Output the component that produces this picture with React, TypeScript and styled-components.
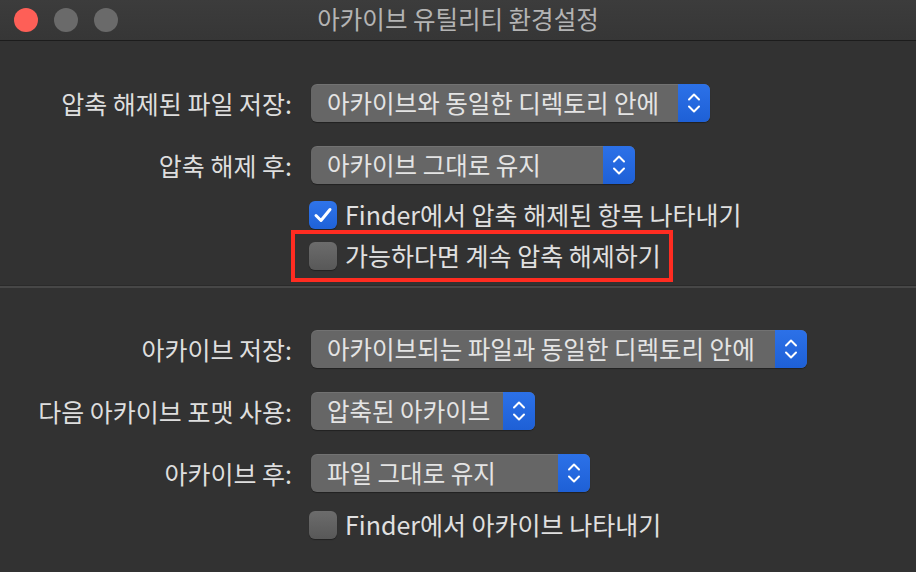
import React from 'react';
import styled, { createGlobalStyle } from 'styled-components';

const GlobalStyle = createGlobalStyle`
  html, body {
    margin: 0;
    padding: 0;
    background: #323232;
  }
  body {
    font-family: "Noto Sans CJK KR", "Noto Sans", sans-serif;
    -webkit-font-smoothing: antialiased;
  }
`;

const Window = styled.div`
  width: 916px;
  height: 572px;
  background: #323232;
  overflow: hidden;
  display: flex;
  flex-direction: column;
`;

const TitleBar = styled.div`
  position: relative;
  height: 40px;
  flex-shrink: 0;
  background: linear-gradient(#3c3c3c, #363636);
  border-bottom: 1px solid #1c1c1c;
  display: flex;
  align-items: center;
  justify-content: center;
`;

const Lights = styled.div`
  position: absolute;
  left: 14px;
  top: 8px;
  display: flex;
  gap: 16px;
`;

const Light = styled.span<{ $color: string }>`
  width: 24px;
  height: 24px;
  border-radius: 50%;
  background: ${(p) => p.$color};
`;

const Title = styled.div`
  color: #b4b4b4;
  font-size: 24.5px;
  line-height: 1;
  margin-top: -2px;
`;

const Section = styled.div<{ $top: number; $bottom: number }>`
  padding: ${(p) => p.$top}px 0 ${(p) => p.$bottom}px;
  display: flex;
  flex-direction: column;
`;

const Row = styled.div`
  display: grid;
  grid-template-columns: 292px auto;
  column-gap: 19px;
  align-items: center;
  height: 38px;
  & + & {
    margin-top: 24px;
  }
`;

const Label = styled.div`
  text-align: right;
  color: #dedede;
  font-size: 25px;
  line-height: 1;
  white-space: nowrap;
`;

const Popup = styled.div<{ $width: number }>`
  width: ${(p) => p.$width}px;
  height: 38px;
  box-sizing: border-box;
  display: flex;
  align-items: stretch;
  border-radius: 6px;
  background: #666666;
  box-shadow: 0 1px 1px rgba(0, 0, 0, 0.35), inset 0 1px 0 rgba(255, 255, 255, 0.08);
  overflow: hidden;
`;

const PopupText = styled.div`
  flex: 1;
  display: flex;
  align-items: center;
  padding-left: 16px;
  color: #e4e4e4;
  font-size: 24.5px;
  line-height: 1;
  white-space: nowrap;
  overflow: hidden;
`;

const Stepper = styled.div`
  width: 32px;
  flex-shrink: 0;
  background: linear-gradient(#2c71e8, #1e60d6);
  display: flex;
  align-items: center;
  justify-content: center;
`;

const CheckRow = styled.div<{ $marked?: boolean }>`
  position: relative;
  display: flex;
  align-items: center;
  gap: 8px;
  height: 41px;
  margin-left: 309px;
  width: fit-content;
  color: #e0e0e0;
  font-size: 25px;
  line-height: 1;
  white-space: nowrap;

  ${(p) =>
    p.$marked &&
    `
    &::after {
      content: '';
      position: absolute;
      left: -18px;
      top: -5px;
      width: 382px;
      height: 52px;
      box-sizing: border-box;
      border: 4px solid #ff2c21;
    }
  `}
`;

const Box = styled.span<{ $checked?: boolean }>`
  width: 28px;
  height: 28px;
  flex-shrink: 0;
  box-sizing: border-box;
  border-radius: 6px;
  display: flex;
  align-items: center;
  justify-content: center;
  background: ${(p) =>
    p.$checked ? 'linear-gradient(#2f74ea, #1f62d8)' : 'linear-gradient(#6c6c6c, #585858)'};
  box-shadow: 0 1px 1px rgba(0, 0, 0, 0.35);
`;

const Separator = styled.div`
  height: 2px;
  background: #474747;
  border-top: 1px solid #2a2a2a;
`;

const Chevrons = () => (
  <svg width="14" height="26" viewBox="0 0 14 26" fill="none">
    <path d="M2 9.5 L7 4.5 L12 9.5" stroke="#fff" strokeWidth="2" strokeLinecap="round" strokeLinejoin="round" />
    <path d="M2 16.5 L7 21.5 L12 16.5" stroke="#fff" strokeWidth="2" strokeLinecap="round" strokeLinejoin="round" />
  </svg>
);

const Check = () => (
  <svg width="20" height="18" viewBox="0 0 20 18" fill="none">
    <path d="M3 9.5 L8 14.5 L17 3.5" stroke="#fff" strokeWidth="3" strokeLinecap="round" strokeLinejoin="round" />
  </svg>
);

const Select: React.FC<{ label: string; value: string; width: number }> = ({ label, value, width }) => (
  <Row>
    <Label>{label}</Label>
    <Popup $width={width}>
      <PopupText>{value}</PopupText>
      <Stepper>
        <Chevrons />
      </Stepper>
    </Popup>
  </Row>
);

const Checkbox: React.FC<{ text: string; checked?: boolean; marked?: boolean; top?: number }> = ({
  text,
  checked,
  marked,
  top = 0,
}) => (
  <CheckRow $marked={marked} style={{ marginTop: top }}>
    <Box $checked={checked}>{checked && <Check />}</Box>
    {text}
  </CheckRow>
);

const App: React.FC = () => {
  return (
    <>
      <GlobalStyle />
      <Window>
        <TitleBar>
          <Lights>
            <Light $color="#fe5f57" />
            <Light $color="#6a6a6a" />
            <Light $color="#6a6a6a" />
          </Lights>
          <Title>아카이브 유틸리티 환경설정</Title>
        </TitleBar>

        <Section $top={43} $bottom={9}>
          <Select label="압축 해제된 파일 저장:" value="아카이브와 동일한 디렉토리 안에" width={399} />
          <Select label="압축 해제 후:" value="아카이브 그대로 유지" width={324} />
          <Checkbox text="Finder에서 압축 해제된 항목 나타내기" checked top={10} />
          <Checkbox text="가능하다면 계속 압축 해제하기" marked />
        </Section>

        <Separator />

        <Section $top={42} $bottom={0}>
          <Select label="아카이브 저장:" value="아카이브되는 파일과 동일한 디렉토리 안에" width={496} />
          <Select label="다음 아카이브 포맷 사용:" value="압축된 아카이브" width={224} />
          <Select label="아카이브 후:" value="파일 그대로 유지" width={279} />
          <Checkbox text="Finder에서 아카이브 나타내기" top={12} />
        </Section>
      </Window>
    </>
  );
};

export default App;
